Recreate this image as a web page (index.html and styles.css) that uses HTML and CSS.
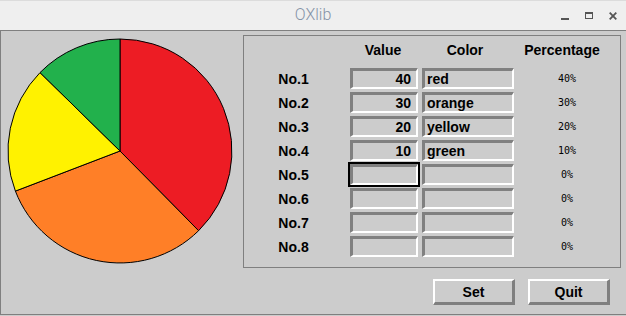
FILE: index.html
```html
<!DOCTYPE html>
<html>
<head>
<meta charset="utf-8">
<link rel="stylesheet" href="styles.css">
</head>
<body>
<div class="window">
  <div class="titlebar">
    <span></span>
    <span class="title">OXlib</span>
    <div class="controls">
      <svg class="ctl" width="8" height="8" viewBox="0 0 8 8"><rect x="0" y="6" width="8" height="2" fill="#555"/></svg>
      <svg class="ctl" width="8" height="8" viewBox="0 0 8 8"><rect x="0.5" y="0.5" width="7" height="6" fill="none" stroke="#555"/><rect x="0" y="0" width="8" height="2" fill="#555"/></svg>
      <svg class="ctl" width="8" height="8" viewBox="0 0 8 8"><path d="M0.7 0.7 L7.3 7.3 M7.3 0.7 L0.7 7.3" stroke="#555" stroke-width="1.8"/></svg>
    </div>
  </div>
  <div class="client">
    <div class="chart">
      <svg width="242" height="283" viewBox="0 0 242 283">
        <g stroke="#000" stroke-width="1" stroke-linejoin="round">
          <path d="M119 120 L119 8 A112 112 0 0 1 197.6 199.7 Z" fill="#ed1c24"/>
          <path d="M119 120 L197.6 199.7 A112 112 0 0 1 14.4 160.1 Z" fill="#ff7f27"/>
          <path d="M119 120 L14.4 160.1 A112 112 0 0 1 39 41.6 Z" fill="#fff200"/>
          <path d="M119 120 L39 41.6 A112 112 0 0 1 119 8 Z" fill="#22b14c"/>
        </g>
      </svg>
    </div>
    <div class="side">
      <div class="panel">
        <div class="grid">
          <div></div>
          <div class="hd hd-value">Value</div>
          <div class="hd hd-color">Color</div>
          <div class="hd hd-pct">Percentage</div>

          <div class="lbl">No.1</div>
          <input class="field num" value="40" readonly>
          <input class="field txt" value="red" readonly>
          <div class="pct">40%</div>

          <div class="lbl">No.2</div>
          <input class="field num" value="30" readonly>
          <input class="field txt" value="orange" readonly>
          <div class="pct">30%</div>

          <div class="lbl">No.3</div>
          <input class="field num" value="20" readonly>
          <input class="field txt" value="yellow" readonly>
          <div class="pct">20%</div>

          <div class="lbl">No.4</div>
          <input class="field num" value="10" readonly>
          <input class="field txt" value="green" readonly>
          <div class="pct">10%</div>

          <div class="lbl">No.5</div>
          <input class="field num focused" value="" readonly>
          <input class="field txt" value="" readonly>
          <div class="pct">0%</div>

          <div class="lbl">No.6</div>
          <input class="field num" value="" readonly>
          <input class="field txt" value="" readonly>
          <div class="pct">0%</div>

          <div class="lbl">No.7</div>
          <input class="field num" value="" readonly>
          <input class="field txt" value="" readonly>
          <div class="pct">0%</div>

          <div class="lbl">No.8</div>
          <input class="field num" value="" readonly>
          <input class="field txt" value="" readonly>
          <div class="pct">0%</div>
        </div>
      </div>
      <div class="buttons">
        <button class="btn">Set</button>
        <button class="btn">Quit</button>
      </div>
    </div>
  </div>
</div>
</body>
</html>
```

FILE: styles.css
```css
html, body {
  margin: 0;
  padding: 0;
  background: #cccccc;
}
.window {
  width: 626px;
  height: 316px;
  display: flex;
  flex-direction: column;
  font-family: "Liberation Sans", Arial, sans-serif;
}
.titlebar {
  height: 30px;
  box-sizing: border-box;
  background: #efefef;
  border-top: 1px solid #dcdcdc;
  display: grid;
  grid-template-columns: 1fr auto 1fr;
  align-items: center;
}
.title {
  font-family: Roboto, "Open Sans", sans-serif;
  font-weight: 300;
  font-size: 16px;
  color: #8593a7;
  line-height: 30px;
  margin-top: -1px;
}
.controls {
  justify-self: end;
  display: flex;
  gap: 16px;
  padding-right: 9px;
  align-self: start;
  padding-top: 11px;
}
.ctl {
  display: block;
}
.client {
  height: 285px;
  box-sizing: border-box;
  border-top: 1px solid #7f7f7f;
  border-left: 1px solid #7f7f7f;
  border-bottom: 1px solid #7f7f7f;
  background: #cccccc;
  display: flex;
}
.chart svg {
  display: block;
}
.chart {
  width: 242px;
}
.side {
  width: 378px;
  display: flex;
  flex-direction: column;
}
.panel {
  margin-top: 4px;
  border: 1px solid #7f7f7f;
  padding-bottom: 10px;
}
.grid {
  display: grid;
  grid-template-columns: 106px 72px 92px 1fr;
  grid-template-rows: 29px repeat(8, 21px);
  row-gap: 3px;
  align-items: center;
}
.hd {
  font-weight: bold;
  font-size: 14px;
  text-align: center;
  color: #000;
  margin-top: -1px;
}
.hd-value { padding-right: 6px; }
.hd-color { padding-right: 6px; }
.hd-pct { padding-right: 10px; }
.lbl {
  font-weight: bold;
  font-size: 14px;
  text-align: center;
  padding-right: 7px;
  color: #000;
}
.field {
  -webkit-appearance: none;
  appearance: none;
  box-sizing: border-box;
  height: 21px;
  margin: 0;
  border-style: solid;
  border-width: 3px 2px 2px 3px;
  border-color: #808080 #ffffff #ffffff #808080;
  background: #cccccc;
  font-family: "Liberation Sans", Arial, sans-serif;
  font-weight: bold;
  font-size: 14px;
  color: #000;
  line-height: 16px;
  outline: none;
  border-radius: 0;
}
.num {
  width: 68px;
  text-align: right;
  padding: 0 5px 0 0;
}
.txt {
  width: 92px;
  text-align: left;
  padding: 0 0 0 2px;
}
.focused {
  outline: 2px solid #000;
}
.pct {
  font-family: "DejaVu Sans Mono", monospace;
  font-size: 10px;
  text-align: center;
  color: #000;
}
.buttons {
  display: flex;
  justify-content: flex-end;
  gap: 13px;
  padding-right: 11px;
  margin-top: 11px;
}
.btn {
  -webkit-appearance: none;
  appearance: none;
  box-sizing: border-box;
  width: 82px;
  height: 26px;
  margin: 0;
  padding: 0;
  border-style: solid;
  border-width: 2px 3px 3px 2px;
  border-color: #ffffff #7f7f7f #7f7f7f #ffffff;
  background: #cccccc;
  font-family: "Liberation Sans", Arial, sans-serif;
  font-weight: bold;
  font-size: 14px;
  color: #000;
  border-radius: 0;
}
```
